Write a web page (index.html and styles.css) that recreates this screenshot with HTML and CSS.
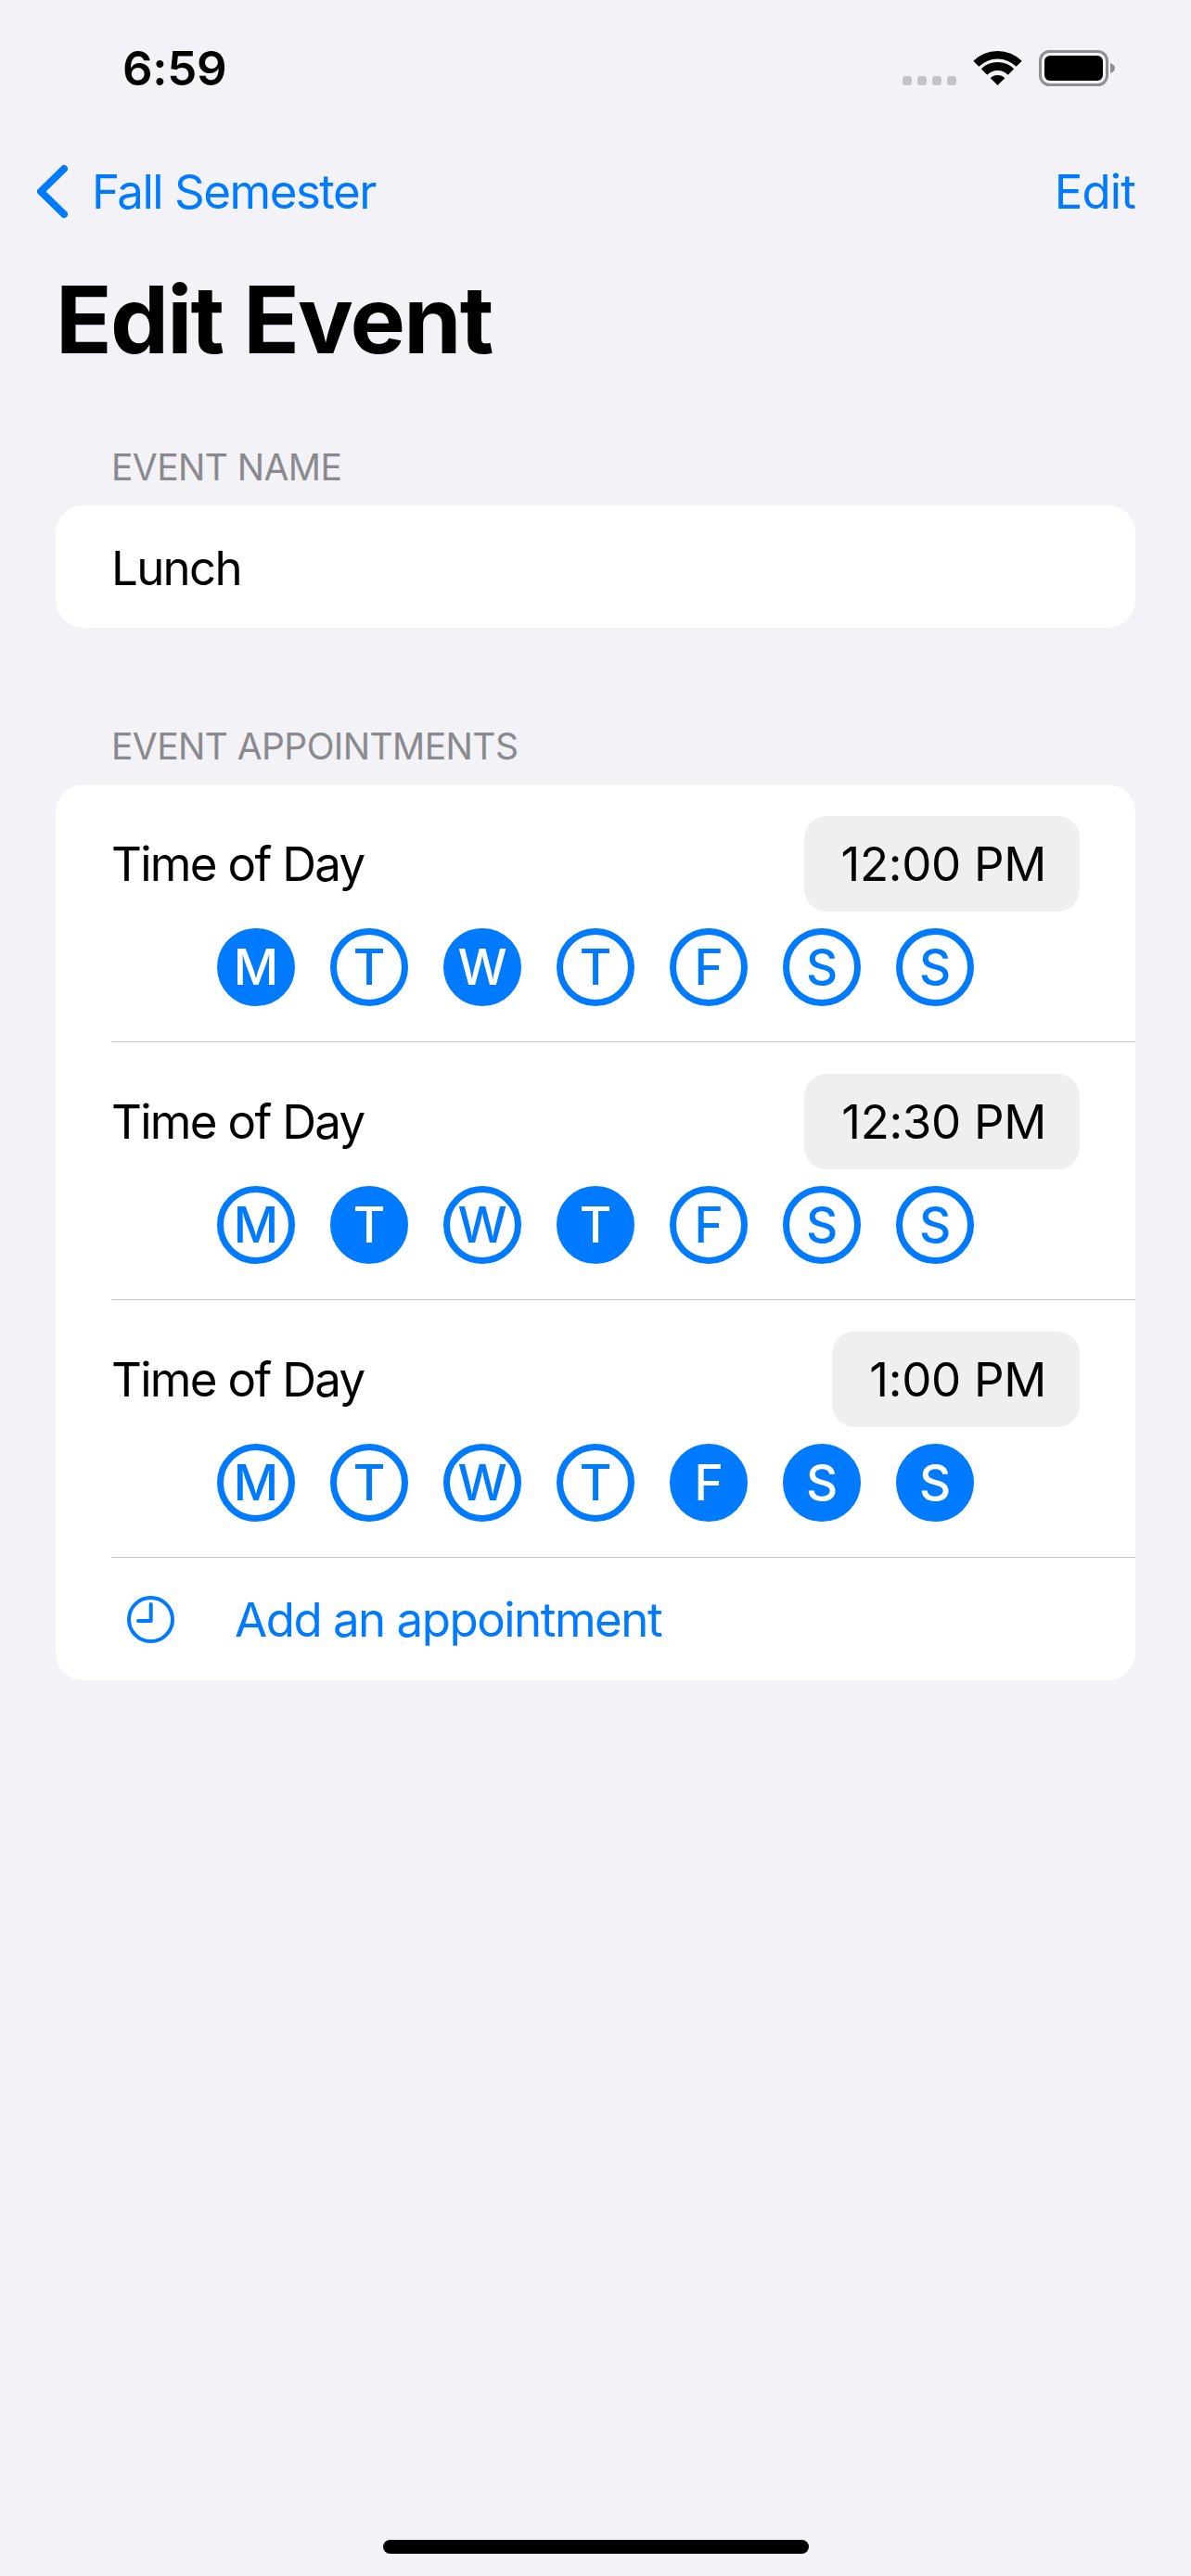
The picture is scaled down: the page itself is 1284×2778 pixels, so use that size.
FILE: index.html
```html
<!DOCTYPE html>
<html lang="en">
<head>
  <meta charset="UTF-8" />
  <meta name="viewport" content="width=device-width, initial-scale=1.0"/>
  <title>Edit Event</title>
  <link rel="stylesheet" href="styles.css">
</head>
<body>
  <div class="page">

    <!-- Status bar -->
    <div class="status-bar">
      <span class="time">6:59</span>
      <div class="status-icons">
        <div class="signal"><i></i><i></i><i></i><i></i></div>
        <svg class="wifi" width="51" height="37" viewBox="0 0 51 37">
          <path d="M-.7 10.8A37 37 0 0 1 51.7 10.8L45.65 16.85A28.5 28.5 0 0 0 5.35 16.85Z"/>
          <path d="M7.8 19.3A25 25 0 0 1 43.2 19.3L36.8 25.7A16 16 0 0 0 14.2 25.7Z"/>
          <path d="M17.7 29.2A11 11 0 0 1 33.3 29.2L25.5 37Z"/>
        </svg>
        <svg class="battery" width="82" height="39" viewBox="0 0 82 39">
          <rect x="1.5" y="1.5" width="72" height="36" rx="10" fill="none" stroke="#8e8e93" stroke-width="3"/>
          <rect x="6" y="6" width="63" height="27" rx="6" fill="#000"/>
          <path d="M77 14C80 15 82 17 82 19.5C82 22 80 24 77 25Z" fill="#8e8e93"/>
        </svg>
      </div>
    </div>

    <!-- Nav -->
    <div class="nav">
      <a class="back">
        <svg width="33" height="57" viewBox="0 0 33 57">
          <polyline points="29,4 4,28.5 29,53" fill="none" stroke="#007aff" stroke-width="8" stroke-linecap="round" stroke-linejoin="round"/>
        </svg>
        Fall Semester
      </a>
      <a class="edit">Edit</a>
    </div>

    <h1>Edit Event</h1>

    <div class="section-label first">EVENT NAME</div>
    <div class="card">
      <div class="name-row">Lunch</div>
    </div>

    <div class="section-label">EVENT APPOINTMENTS</div>
    <div class="card">
      <div class="appt">
        <div class="appt-head">
          <span>Time of Day</span>
          <span class="time-pill">12:00 PM</span>
        </div>
        <div class="days">
          <span class="day on">M</span>
          <span class="day">T</span>
          <span class="day on">W</span>
          <span class="day">T</span>
          <span class="day">F</span>
          <span class="day">S</span>
          <span class="day">S</span>
        </div>
      </div>
      <hr class="sep">
      <div class="appt">
        <div class="appt-head">
          <span>Time of Day</span>
          <span class="time-pill">12:30 PM</span>
        </div>
        <div class="days">
          <span class="day">M</span>
          <span class="day on">T</span>
          <span class="day">W</span>
          <span class="day on">T</span>
          <span class="day">F</span>
          <span class="day">S</span>
          <span class="day">S</span>
        </div>
      </div>
      <hr class="sep">
      <div class="appt">
        <div class="appt-head">
          <span>Time of Day</span>
          <span class="time-pill">1:00 PM</span>
        </div>
        <div class="days">
          <span class="day">M</span>
          <span class="day">T</span>
          <span class="day">W</span>
          <span class="day">T</span>
          <span class="day on">F</span>
          <span class="day on">S</span>
          <span class="day on">S</span>
        </div>
      </div>
      <hr class="sep">
      <div class="add-row">
        <svg width="51" height="51" viewBox="0 0 51 51">
          <circle cx="25.5" cy="25.5" r="23.5" fill="none" stroke="#007aff" stroke-width="4"/>
          <path d="M25.7 9V27H12" fill="none" stroke="#007aff" stroke-width="4" stroke-linecap="round" stroke-linejoin="round"/>
        </svg>
        <span>Add an appointment</span>
      </div>
    </div>

    <div class="home-bar"></div>
  </div>
</body>
</html>
```

FILE: styles.css
```css
body {
  margin: 0;
  background: #f2f2f7;
  font-family: Inter, "Liberation Sans", sans-serif;
  color: #000;
}
.page {
  display: flex;
  flex-direction: column;
  height: 2778px;
  overflow: hidden;
}

.status-bar {
  display: flex;
  justify-content: space-between;
  align-items: center;
  height: 146px;
  padding: 0 82px 0 132px;
}
.time {
  font-size: 51px;
  font-weight: 600;
  letter-spacing: -0.3px;
}
.status-icons {
  display: flex;
  align-items: flex-end;
  gap: 19px;
}
.signal {
  display: flex;
  gap: 6px;
  margin-bottom: 1px;
}
.signal i {
  width: 10px;
  height: 10px;
  border-radius: 3px;
  background: #c4c3c8;
}
.wifi { overflow: visible; margin-bottom: 1px; }

.nav {
  display: flex;
  justify-content: space-between;
  align-items: center;
  height: 120px;
  padding: 0 60px 0 40px;
  font-size: 51px;
  letter-spacing: -1.5px;
  color: #007aff;
}
.back {
  display: flex;
  align-items: center;
  gap: 26px;
}
.edit { letter-spacing: -0.9px; }

h1 {
  margin: 0;
  padding-left: 60px;
  font-size: 100px;
  font-weight: 700;
  line-height: 158px;
  letter-spacing: -1.8px;
}

.section-label {
  margin: 108px 0 21px;
  padding-left: 120px;
  font-size: 39px;
  line-height: 40px;
  letter-spacing: -0.6px;
  color: #8a8a8e;
}
.section-label.first { margin-top: 60px; }

.card {
  margin: 0 60px;
  background: #fff;
  border-radius: 30px;
  font-size: 51px;
  letter-spacing: -1.7px;
}
.name-row {
  display: flex;
  align-items: center;
  box-sizing: border-box;
  height: 132px;
  padding: 2px 0 0 60px;
}

.appt { padding: 34px 0 38px; }
.appt-head {
  display: flex;
  justify-content: space-between;
  align-items: center;
  padding: 0 60px;
}
.time-pill {
  display: flex;
  align-items: center;
  height: 103px;
  padding: 0 36px 0 40px;
  background: #efefef;
  border-radius: 24px;
  letter-spacing: -0.3px;
}
.days {
  display: flex;
  justify-content: center;
  gap: 38px;
  margin-top: 18px;
}
.day {
  display: flex;
  justify-content: center;
  align-items: center;
  box-sizing: border-box;
  width: 84px;
  height: 84px;
  border: 7px solid #007aff;
  border-radius: 50%;
  font-size: 53px;
  font-weight: 500;
  letter-spacing: 0;
  color: #007aff;
}
.day.on {
  background: #007aff;
  color: #fff;
}

.sep {
  height: 1px;
  margin: 0 0 0 60px;
  border: 0;
  background: #c6c6c8;
}

.add-row {
  display: flex;
  align-items: center;
  gap: 65px;
  height: 132px;
  padding-left: 77px;
  letter-spacing: -1.5px;
  color: #007aff;
}

.home-bar {
  width: 459px;
  height: 15px;
  margin: auto auto 24px;
  border-radius: 8px;
  background: #000;
}
```
